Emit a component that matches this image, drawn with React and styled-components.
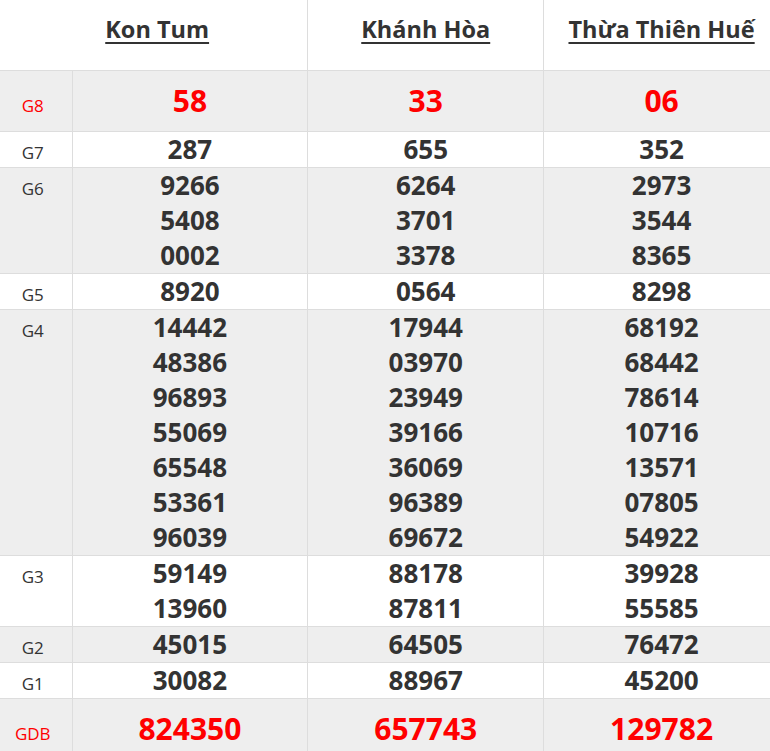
import React from 'react';
import styled, { createGlobalStyle } from 'styled-components';

const GlobalStyle = createGlobalStyle`
    html, body {
        margin: 0;
        padding: 0;
        overflow: hidden;
        background: #fff;
    }
    body {
        font-family: "Open Sans", "Noto Sans", sans-serif;
        color: #333;
    }
`;

const Table = styled.table`
    width: 780px;
    border-collapse: collapse;
    table-layout: fixed;
    td,
    th {
        padding: 0;
        border: 1px solid #ddd;
        vertical-align: baseline;
    }
`;

const HeadCell = styled.th`
    height: 70px;
    box-sizing: border-box;
    padding: 12px 0 23px ${(p) => (p.$first ? '7px' : '0')} !important;
    line-height: 35px;
    font-size: 23.5px;
    font-weight: 700;
    text-align: center;
    border-top: none !important;
    border-left: ${(p) => (p.$first ? 'none' : '1px solid #ddd')} !important;
    span {
        text-decoration: underline;
        text-underline-offset: 4px;
    }
`;

const Row = styled.tr`
    background: ${(p) => (p.$shaded ? '#eeeeee' : '#ffffff')};
`;

const Label = styled.td`
    text-align: center;
    padding-right: 6px !important;
    font-size: 17px;
    color: ${(p) => (p.$special ? '#ff0000' : '#333')};
    border-left: none !important;
`;

const Cell = styled.td`
    text-align: center;
    font-weight: 700;
    font-size: ${(p) => (p.$special ? '30px' : '26px')};
    line-height: ${(p) => (p.$special ? '60px' : '35px')};
    color: ${(p) => (p.$special ? '#ff0000' : '#333')};
`;

const Num = styled.div``;

const provinces = ['Kon Tum', 'Khánh Hòa', 'Thừa Thiên Huế'];

const prizes = [
    { name: 'G8', special: true, values: [['58'], ['33'], ['06']] },
    { name: 'G7', values: [['287'], ['655'], ['352']] },
    {
        name: 'G6',
        values: [
            ['9266', '5408', '0002'],
            ['6264', '3701', '3378'],
            ['2973', '3544', '8365'],
        ],
    },
    { name: 'G5', values: [['8920'], ['0564'], ['8298']] },
    {
        name: 'G4',
        values: [
            ['14442', '48386', '96893', '55069', '65548', '53361', '96039'],
            ['17944', '03970', '23949', '39166', '36069', '96389', '69672'],
            ['68192', '68442', '78614', '10716', '13571', '07805', '54922'],
        ],
    },
    {
        name: 'G3',
        values: [
            ['59149', '13960'],
            ['88178', '87811'],
            ['39928', '55585'],
        ],
    },
    { name: 'G2', values: [['45015'], ['64505'], ['76472']] },
    { name: 'G1', values: [['30082'], ['88967'], ['45200']] },
    { name: 'GDB', special: true, values: [['824350'], ['657743'], ['129782']] },
];

export default function App() {
    return (
        <>
            <GlobalStyle />
            <Table>
                <colgroup>
                    <col style={{ width: 72 }} />
                    <col />
                    <col />
                    <col />
                </colgroup>
                <thead>
                    <tr>
                        {provinces.map((p, i) => (
                            <HeadCell key={p} colSpan={i === 0 ? 2 : 1} $first={i === 0}>
                                <span>{p}</span>
                            </HeadCell>
                        ))}
                    </tr>
                </thead>
                <tbody>
                    {prizes.map((prize, i) => (
                        <Row key={prize.name} $shaded={i % 2 === 0}>
                            <Label $special={prize.special}>{prize.name}</Label>
                            {prize.values.map((list, j) => (
                                <Cell key={j} $special={prize.special}>
                                    {list.map((n, k) => (
                                        <Num key={k}>{n}</Num>
                                    ))}
                                </Cell>
                            ))}
                        </Row>
                    ))}
                </tbody>
            </Table>
        </>
    );
}
